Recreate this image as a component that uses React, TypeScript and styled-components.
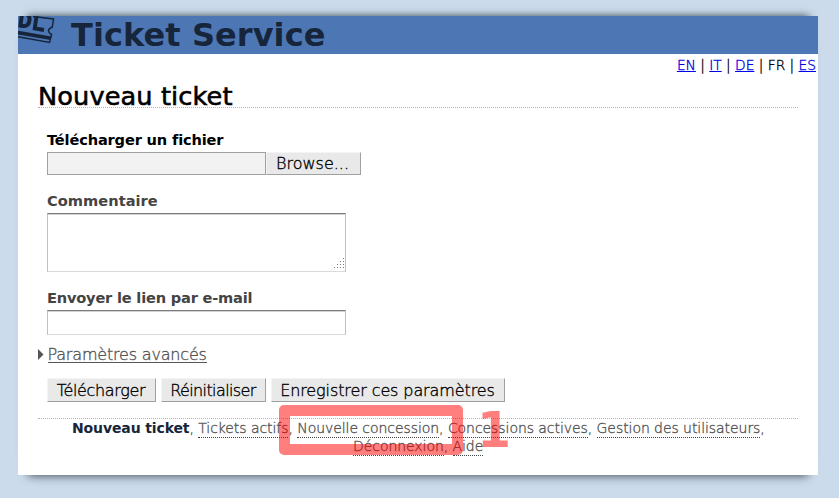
import React from "react";
import styled, { createGlobalStyle } from "styled-components";

const GlobalStyle = createGlobalStyle`
  * { box-sizing: border-box; }
  body {
    margin: 0;
    background: #ccdbeb;
    color: #000;
    font-family: "DejaVu Sans", sans-serif;
    overflow: hidden;
  }
`;

const Page = styled.div`
  height: 498px;
  padding: 16px 21px 0 18px;
`;

const Sheet = styled.main`
  width: 800px;
  height: 459px;
  background: #fff;
  box-shadow: 0 -9px 8px -9px #36414b, 0 11px 9px -10px #46525e;
`;

const Header = styled.header`
  display: flex;
  height: 38px;
  background: #4c76b4;
  color: #17253a;
`;

const Logo = styled.svg`
  display: block;
  width: 53px;
  height: 38px;
  flex: none;
`;

const Brand = styled.div`
  font-size: 32px;
  font-weight: bold;
  line-height: 38px;
  letter-spacing: 0.08px;
  white-space: nowrap;
`;

const Languages = styled.nav`
  height: 24px;
  padding: 3px 2px 0 0;
  text-align: right;
  font-size: 13.75px;
  font-weight: 200;
  -webkit-text-stroke: 0.35px currentColor;
  line-height: 17px;
  white-space: nowrap;

  a {
    color: #0000e6;
    text-decoration: underline;
  }
`;

const Content = styled.div`
  padding: 0 20px;
`;

const Title = styled.h1`
  margin: 0;
  height: 30px;
  border-bottom: 1px dotted #b4b4b4;
  font-size: 25.6px;
  font-weight: normal;
  letter-spacing: 0.12px;
  line-height: 36px;
  -webkit-text-stroke: 0.6px #000;
`;

const Form = styled.form`
  padding: 23px 0 0 9px;
`;

const Label = styled.label<{ $required?: boolean; $top?: number; $spacing?: number }>`
  display: block;
  height: 21px;
  margin-top: ${({ $top = 0 }) => $top}px;
  color: ${({ $required }) => ($required ? "#000" : "#444")};
  font-size: 14.6px;
  font-weight: bold;
  letter-spacing: ${({ $spacing = 0 }) => $spacing}px;
  line-height: 17px;
`;

const FileRow = styled.div`
  display: flex;
  height: 23px;
`;

const FileName = styled.div`
  width: 219px;
  height: 23px;
  border: 1px solid #a0a0a0;
  background: #f2f2f2;
`;

const Button = styled.button<{ $width: number; $spacing?: number }>`
  width: ${({ $width }) => $width}px;
  height: 24px;
  padding: 0 1px 0 0;
  border: 1px solid #a0a0a0;
  border-top-color: #f4f4f4;
  border-left-color: #f4f4f4;
  background: #e9e9e9;
  color: #000;
  font: 200 16px/24px "DejaVu Sans", sans-serif;
  -webkit-text-stroke: 0.35px currentColor;
  letter-spacing: ${({ $spacing = 0 }) => $spacing}px;
  white-space: nowrap;
`;

const BrowseButton = styled(Button)`
  height: 23px;
  padding-right: 2px;
  line-height: 21px;
`;

const Field = styled.div<{ $height: number }>`
  display: flex;
  align-items: flex-end;
  justify-content: flex-end;
  width: 299px;
  height: ${({ $height }) => $height}px;
  border: 1px solid #c0c0c0;
  border-top-color: #7b7b7b;
  border-bottom-color: #dadada;
  box-shadow: inset 0 1px #d2d2d2;
`;

const Grip = styled.svg`
  display: block;
  width: 11px;
  height: 13px;
`;

const Advanced = styled.div`
  display: flex;
  align-items: flex-start;
  height: 20px;
  margin: 9px 0 0 -9px;
  color: #555;
  font-size: 16px;
  font-weight: 200;
  -webkit-text-stroke: 0.35px currentColor;
  letter-spacing: -0.18px;
  line-height: 21px;

  svg {
    display: block;
    width: 9.5px;
    height: 20px;
  }

  span {
    height: 19px;
    border-bottom: 1px solid #555;
  }
`;

const Buttons = styled.div`
  display: flex;
  gap: 5px;
  margin-top: 14px;
`;

const Footer = styled.footer`
  position: relative;
  margin-top: 16px;
  border-top: 1px dotted #b4b4b4;
  color: #555;
  font-size: 14px;
  line-height: 18px;
`;

const FooterLine = styled.div<{ $indent: number }>`
  height: 18px;
  padding-left: ${({ $indent }) => $indent}px;
  font-weight: 200;
  -webkit-text-stroke: 0.35px currentColor;
  letter-spacing: -0.06px;
  white-space: nowrap;

  strong {
    color: #17253a;
    font-weight: 700;
    letter-spacing: -0.12px;
    -webkit-text-stroke: 0;
  }

  span {
    display: inline-block;
    height: 19px;
    border-bottom: 1px dotted #444;
    vertical-align: top;
  }
`;

const Highlight = styled.div`
  position: absolute;
  left: 241px;
  top: -14px;
  width: 184px;
  height: 50px;
  border: 11px solid rgba(255, 0, 0, 0.5);
  border-radius: 5px;
`;

const Step = styled.div`
  position: absolute;
  left: 439px;
  top: -17px;
  color: rgba(255, 0, 0, 0.5);
  font-size: 49px;
  font-weight: bold;
  line-height: 57px;
`;

export default function App() {
  return (
    <Page>
      <GlobalStyle />
      <Sheet>
        <Header>
          <Logo viewBox="0 0 53 38" fill="none" stroke="#17253a">
            <path d="M4 -2L2.500 9.500Q10.500 12 11.500 4Q12 0 9 -1.500" strokeWidth="4" />
            <path d="M18.500 0L16.800 12.300L26 14" strokeWidth="3.900" />
            <path d="M15 0.500L35.500 3L34.300 11Q27 14.500 33.500 18.500L31.500 26.500L0 20.700" strokeWidth="1.500" />
            <path d="M0 16.500L33 22.300" strokeWidth="3.700" />
          </Logo>
          <Brand>Ticket Service</Brand>
        </Header>
        <Languages>
          <a>EN</a> | <a>IT</a> | <a>DE</a> | FR | <a>ES</a>
        </Languages>
        <Content>
          <Title>Nouveau ticket</Title>
          <Form>
            <Label $required $spacing={-0.16}>Télécharger un fichier</Label>
            <FileRow>
              <FileName />
              <BrowseButton type="button" $width={95}>Browse...</BrowseButton>
            </FileRow>
            <Label $top={17} $spacing={0.04}>Commentaire</Label>
            <Field $height={59}>
              <Grip viewBox="0 0 11 13" fill="#777" shapeRendering="crispEdges">
                <path d="M9 0h1v1h-1zM6 3h1v1h-1zM9 3h1v1h-1zM3 6h1v1h-1zM6 6h1v1h-1zM9 6h1v1h-1zM0 9h1v1h-1zM3 9h1v1h-1zM6 9h1v1h-1zM9 9h1v1h-1z" />
              </Grip>
            </Field>
            <Label $top={17} $spacing={-0.2}>Envoyer le lien par e-mail</Label>
            <Field $height={25} />
            <Advanced>
              <svg viewBox="0 0 9.5 20"><path d="M0 5L5.500 10.500L0 16z" fill="#555" /></svg>
              <span>Paramètres avancés</span>
            </Advanced>
            <Buttons>
              <Button type="button" $width={109} $spacing={-0.35}>Télécharger</Button>
              <Button type="button" $width={105} $spacing={-0.6}>Réinitialiser</Button>
              <Button type="button" $width={234} $spacing={-0.1}>Enregistrer ces paramètres</Button>
            </Buttons>
          </Form>
          <Footer>
            <FooterLine $indent={34}>
              <strong>Nouveau ticket</strong>, <span>Tickets actifs</span>, <span>Nouvelle concession</span>, <span>Concessions actives</span>, <span>Gestion des utilisateurs</span>,
            </FooterLine>
            <FooterLine $indent={315}>
              <span>Déconnexion</span>, <span>Aide</span>
            </FooterLine>
            <Highlight />
            <Step>1</Step>
          </Footer>
        </Content>
      </Sheet>
    </Page>
  );
}
